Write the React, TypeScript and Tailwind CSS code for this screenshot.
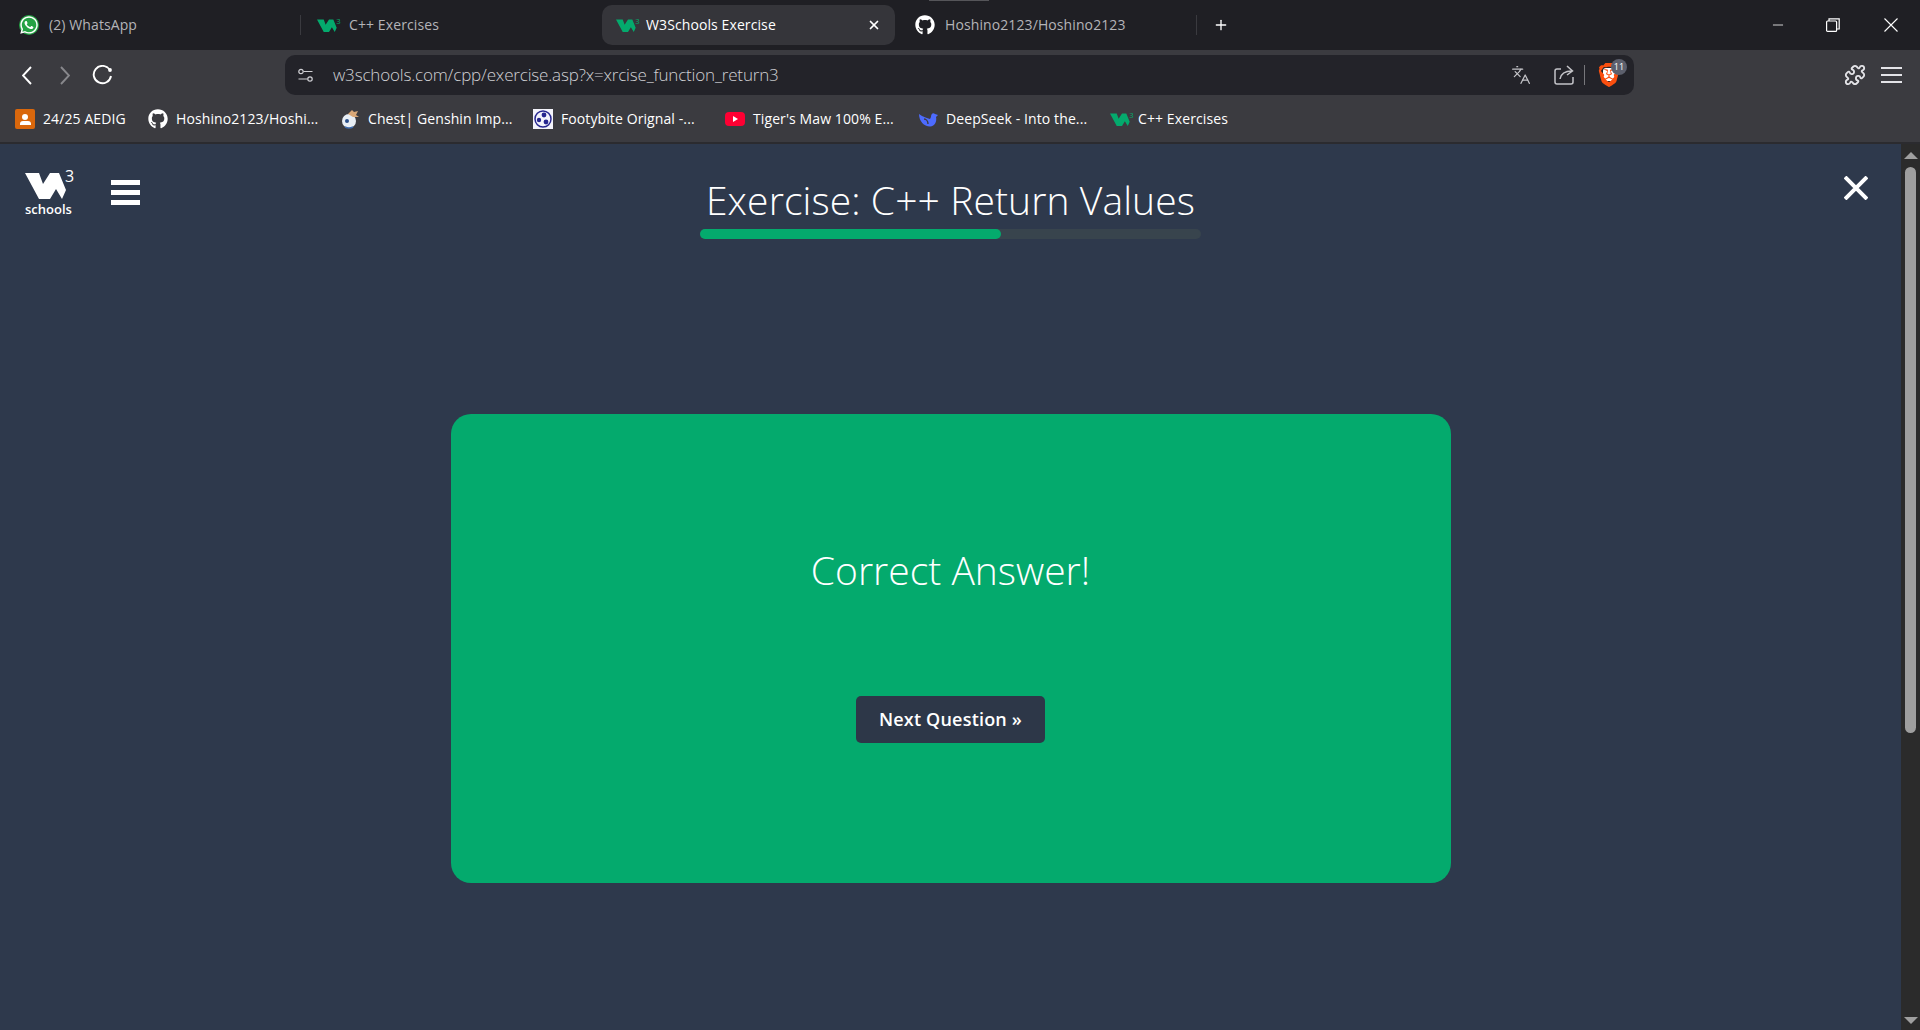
import { X, Plus, Minus, Languages, Puzzle } from "lucide-react";
import { FaWhatsapp, FaGithub } from "react-icons/fa";
import { SiBrave } from "react-icons/si";

const uiFont = "font-['Open_Sans',sans-serif]";

function W3Mark({ className }: { className: string }) {
  return (
    <svg viewBox="0 -3 50 31" className={`overflow-visible ${className}`} fill="currentColor">
      <polygon points="0,0 14,0 18,11 25,0 34,0 41,17 37,26 31,16 25,26 14,26" />
      <text x="40" y="9" fontSize="16" fontFamily="Open Sans, sans-serif">3</text>
    </svg>
  );
}

function AedigIcon() {
  return (
    <div className="flex h-5 w-5 shrink-0 flex-col items-center justify-center rounded-[2px] bg-[#d9670c]">
      <div className="h-[6px] w-[6px] rounded-full bg-white" />
      <div className="mt-[1px] h-[4px] w-[11px] rounded-t-[3px] bg-white" />
    </div>
  );
}

function ChestIcon() {
  return (
    <svg viewBox="0 0 20 20" className="h-5 w-5 shrink-0">
      <circle cx="9" cy="12" r="7" fill="#e8eef5" />
      <path d="M8 5 L12 1 L14 3 L18 2 L16 6 L19 8 L13 8 Z" fill="#d9a878" />
      <circle cx="7" cy="12" r="2" fill="#2a4f8a" />
      <path d="M5 18 Q9 20 13 18" stroke="#3f6db0" strokeWidth="1.5" fill="none" />
    </svg>
  );
}

function FootyIcon() {
  return (
    <svg viewBox="0 0 20 20" className="h-5 w-5 shrink-0">
      <rect width="20" height="20" fill="#f3f3fb" />
      <circle cx="10" cy="10" r="8" fill="none" stroke="#26268f" strokeWidth="1.5" />
      <circle cx="11" cy="6" r="2.4" fill="#26268f" />
      <circle cx="6" cy="11" r="2.2" fill="#26268f" />
      <circle cx="13" cy="13" r="2.4" fill="#26268f" />
    </svg>
  );
}

function YoutubeIcon() {
  return (
    <div className="flex h-[14px] w-5 shrink-0 items-center justify-center rounded-[4px] bg-[#ff0033]">
      <div className="h-0 w-0 border-y-[3px] border-l-[5px] border-y-transparent border-l-white" />
    </div>
  );
}

function DeepSeekIcon() {
  return (
    <svg viewBox="0 0 20 16" className="h-4 w-5 shrink-0">
      <path
        d="M1 3 C1 10 6 15.5 12 15.5 C17 15.5 19 10 18 6 L20 4 L17 3 C15 1 13 3 13 6 L12 8 C9 7 5 6 1 3 Z"
        fill="#4d6bfe"
      />
      <path d="M6 8 C8 8 10 10 10 13" stroke="#3b3b40" strokeWidth="1.4" fill="none" />
    </svg>
  );
}

const bookmarks = [
  { label: "24/25 AEDIG", width: "w-[133px]", icon: <AedigIcon /> },
  { label: "Hoshino2123/Hoshi...", width: "w-[192px]", icon: <FaGithub className="h-5 w-5 shrink-0 text-white" /> },
  { label: "Chest| Genshin Imp...", width: "w-[193px]", icon: <ChestIcon /> },
  { label: "Footybite Orignal -...", width: "w-[192px]", icon: <FootyIcon /> },
  { label: "Tiger's Maw 100% E...", width: "w-[193px]", icon: <YoutubeIcon /> },
  { label: "DeepSeek - Into the...", width: "w-[192px]", icon: <DeepSeekIcon /> },
  { label: "C++ Exercises", width: "w-[125px]", icon: <W3Mark className="-mr-[4px] h-[15px] w-[24px] shrink-0 text-[#04aa6d]" /> },
];

function TabBar() {
  return (
    <div className={`relative flex h-[50px] items-center bg-[#1f1f24] ${uiFont} text-[14px] tracking-[0.1px] text-[#b4b4b8]`}>
      <div className="absolute left-[929px] top-0 h-px w-[60px] bg-[#555559]" />
      <div className="flex w-[300px] items-center pl-[19px]">
        <div className="flex h-5 w-5 items-center justify-center rounded-full bg-[#25a244]">
          <FaWhatsapp className="h-5 w-5 text-white" />
        </div>
        <span className="ml-[10px] -mt-[2px]">(2) WhatsApp</span>
      </div>
      <div className="h-5 w-px bg-[#3a3a3f]" />
      <div className="flex w-[301px] items-center pl-[16px]">
        <W3Mark className="h-[15px] w-[24px] text-[#04aa6d]" />
        <span className="ml-[8px] -mt-[2px]">C++ Exercises</span>
      </div>
      <div className="flex h-10 w-[293px] items-center rounded-[10px] bg-[#35353a] pl-[14px] pr-[14px] text-white">
        <W3Mark className="h-[15px] w-[24px] text-[#04aa6d]" />
        <span className="ml-[6px] -mt-[2px] flex-1">W3Schools Exercise</span>
        <X className="h-[14px] w-[14px]" strokeWidth={3} />
      </div>
      <div className="flex w-[301px] items-center pl-[20px]">
        <FaGithub className="h-5 w-5 text-white" />
        <span className="ml-[10px] -mt-[2px]">Hoshino2123/Hoshino2123</span>
      </div>
      <div className="h-5 w-px bg-[#3a3a3f]" />
      <Plus className="ml-[16px] h-[16px] w-[16px] text-white" strokeWidth={2} />
      <div className="ml-auto flex items-center text-white">
        <Minus className="h-[16px] w-[16px]" strokeWidth={1.2} />
        <svg viewBox="0 0 14 14" className="ml-[40px] h-[14px] w-[14px]" fill="none" stroke="currentColor" strokeWidth="1.2">
          <rect x="0.6" y="3" width="10" height="10.4" rx="1" />
          <path d="M3 3 V0.8 H13.2 V11 H10.6" />
        </svg>
        <svg viewBox="0 0 14 14" className="ml-[44px] mr-[22px] h-[14px] w-[14px]" fill="none" stroke="currentColor" strokeWidth="1.1">
          <path d="M0.5 0.5 L13.5 13.5 M13.5 0.5 L0.5 13.5" />
        </svg>
      </div>
    </div>
  );
}

function AddressBar() {
  return (
    <div className="flex h-[45px] items-start bg-[#3b3b40] pt-[5px]">
      <div className="flex h-10 w-[285px] items-center pl-[22px] text-white">
        <svg viewBox="0 0 10 19" className="h-[19px] w-[10px]" fill="none" stroke="currentColor" strokeWidth="1.9">
          <path d="M9 1 L1 9.5 L9 18" />
        </svg>
        <svg viewBox="0 0 10 19" className="ml-[28px] h-[19px] w-[10px] text-[#88888c]" fill="none" stroke="currentColor" strokeWidth="1.9">
          <path d="M1 1 L9 9.5 L1 18" />
        </svg>
        <svg viewBox="0 0 21 20" className="ml-[22px] h-5 w-[21px]" fill="none" stroke="currentColor" strokeWidth="1.9">
          <path d="M17.5 4.5 A8.7 8.7 0 1 0 19 11" />
          <circle cx="18" cy="5" r="1.9" fill="currentColor" stroke="none" />
        </svg>
      </div>
      <div className="flex h-10 w-[1349px] items-center rounded-[10px] bg-[#232329] pl-[13px] pr-[14px] text-[#d0d0d4]">
        <svg viewBox="0 0 15 15" className="h-[15px] w-[15px]" fill="none" stroke="currentColor" strokeWidth="1.2">
          <circle cx="3" cy="3.5" r="2.2" />
          <path d="M5.5 3.5 H14.5 M0.5 11 H9.5" />
          <circle cx="12" cy="11" r="2.2" />
        </svg>
        <span className={`ml-[20px] flex-1 ${uiFont} text-[17px] font-light tracking-[-0.17px]`}>
          w3schools.com/cpp/exercise.asp?x=xrcise_function_return3
        </span>
        <Languages className="h-5 w-5 text-[#c4c4c8]" strokeWidth={1.5} />
        <svg viewBox="0 0 20 20" className="ml-[23px] h-5 w-5 text-[#c4c4c8]" fill="none" stroke="currentColor" strokeWidth="1.5">
          <path d="M7 4 H3 Q1 4 1 6 V17 Q1 19 3 19 H17 Q19 19 19 17 V12" />
          <path d="M6 14 C7 8 11 6 18 6 M13 1 L18.5 6 L13 10" />
        </svg>
        <div className="ml-[10px] h-5 w-px bg-[#77777b]" />
        <div className="relative ml-[12px] -mr-[1px]">
          <div className="absolute left-[6px] top-[5px] h-[13px] w-[12px] rounded-[3px] bg-white" />
          <SiBrave className="relative h-[24px] w-[24px] text-[#fb4f0f]" />
          <div className={`absolute -right-[6px] -top-[4px] flex h-[16px] w-[16px] items-center justify-center rounded-full bg-[#5c5f6c] ${uiFont} text-[9px] text-white`}>
            11
          </div>
        </div>
      </div>
      <div className="flex h-10 flex-1 items-center pl-[210px] text-[#e4e4e8]">
        <Puzzle className="h-[22px] w-[22px]" strokeWidth={2} />
        <div className="ml-[15px] flex flex-col gap-[5px]">
          <div className="h-[2px] w-[21px] bg-[#e4e4e8]" />
          <div className="h-[2px] w-[21px] bg-[#e4e4e8]" />
          <div className="h-[2px] w-[21px] bg-[#e4e4e8]" />
        </div>
      </div>
    </div>
  );
}

function BookmarkBar() {
  return (
    <div className={`flex h-[47px] items-center bg-[#3b3b40] pl-[15px] pt-[1px] ${uiFont} text-[14px] tracking-[0.1px] text-white`}>
      {bookmarks.map((b) => (
        <div key={b.label} className={`flex items-center gap-[8px] ${b.width}`}>
          {b.icon}
          <span className="-mt-[2px] whitespace-nowrap">{b.label}</span>
        </div>
      ))}
    </div>
  );
}

function Scrollbar() {
  return (
    <div className="flex w-[19px] flex-col items-center bg-[#2b2b2b] pt-[8px] pb-[6px]">
      <div className="h-0 w-0 border-x-[7px] border-b-[7px] border-x-transparent border-b-[#9f9f9f]" />
      <div className="mt-[8px] h-[566px] w-[11px] rounded-full bg-[#9f9f9f]" />
      <div className="mt-auto h-0 w-0 border-x-[7px] border-t-[7px] border-x-transparent border-t-[#9f9f9f]" />
    </div>
  );
}

export default function App() {
  return (
    <div className="flex h-screen flex-col overflow-hidden bg-[#2e394c]">
      <TabBar />
      <AddressBar />
      <BookmarkBar />
      <div className="h-[2px] bg-[#2b2b2f]" />
      <div className="flex min-h-0 flex-1">
        <main className={`min-w-0 flex-1 ${uiFont} text-white`}>
          <div className="grid grid-cols-[1fr_501px_1fr] pt-[26px]">
            <div className="flex items-start pl-[25px]">
              <div className="flex w-[50px] flex-col">
                <W3Mark className="h-[31px] w-[50px] text-white" />
                <span className="mt-[1px] text-[13px] font-semibold leading-[14px]">schools</span>
              </div>
              <div className="ml-[36px] mt-[10px] flex flex-col gap-[5px]">
                <div className="h-[5px] w-[29px] bg-white" />
                <div className="h-[5px] w-[29px] bg-white" />
                <div className="h-[5px] w-[29px] bg-white" />
              </div>
            </div>
            <div>
              <h1 className="mt-[2px] text-center text-[39px] font-light leading-[56px] tracking-[0.1px]">
                Exercise: C++ Return Values
              </h1>
              <div className="mt-[1px] h-[10px] rounded-full bg-[#38444d]">
                <div className="h-full w-[60%] rounded-full bg-[#04aa6d]" />
              </div>
            </div>
            <div className="flex justify-end pr-[33px]">
              <svg viewBox="0 0 24 24" className="mt-[6px] h-6 w-6" fill="none" stroke="currentColor" strokeWidth="4">
                <path d="M1 1 L23 23 M23 1 L1 23" />
              </svg>
            </div>
          </div>
          <div className="mx-auto mt-[175px] flex h-[469px] w-[1000px] flex-col items-center rounded-[20px] bg-[#04aa6d] pt-[130px]">
            <h2 className="text-[39px] font-light leading-[52px]">Correct Answer!</h2>
            <button className="mt-[100px] h-[47px] w-[189px] rounded-[5px] bg-[#2d3748] text-[18px] font-semibold tracking-[0.2px] text-white">
              Next Question »
            </button>
          </div>
        </main>
        <Scrollbar />
      </div>
    </div>
  );
}
